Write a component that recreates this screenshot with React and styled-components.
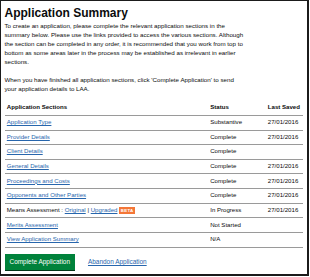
import React from "react";
import styled, { createGlobalStyle } from "styled-components";

const Global = createGlobalStyle`
  html, body { margin: 0; padding: 0; background: #fff; }
  body { font-family: "Liberation Sans", Arial, sans-serif; color: #0b0c0c; }
`;

const Frame = styled.div`
  box-sizing: border-box;
  width: 309px;
  height: 276px;
  border: 2px solid #1b1b1b;
  border-left-width: 1.5px;
  border-top-width: 1.5px;
  padding: 3.5px 4px 3.6px 3.5px;
  background: #fff;
  overflow: hidden;
`;

const Title = styled.h1`
  margin: 0;
  font-size: 12px;
  line-height: 16px;
  font-weight: 700;
  letter-spacing: 0;
`;

const Para = styled.p`
  margin: ${(p) => (p.$gap ? "9px" : "0")} 0 0;
  font-size: 6.2px;
  line-height: 9px;
  white-space: nowrap;
`;

const Sections = styled.div`
  margin-top: 8.7px;
  width: 298px;
  font-size: 6.1px;
  line-height: 9px;
`;

const Row = styled.div`
  box-sizing: border-box;
  display: grid;
  grid-template-columns: 203.4px 57.6px 1fr;
  height: 14.67px;
  padding-top: 1.3px;
  border-bottom: 1px solid #9a9a9a;
  font-weight: ${(p) => (p.$head ? 700 : 400)};
`;

const Cell = styled.div`
  padding-left: 2.3px;
  white-space: nowrap;
`;

const Link = styled.a`
  color: #2766ad;
  text-decoration: underline;
  text-underline-offset: 1px;
  text-decoration-thickness: 0.5px;
  cursor: pointer;
`;

const Tag = styled.span`
  display: inline-block;
  margin-left: 1.7px;
  padding: 0 1.6px;
  background: #f47738;
  color: #fff;
  font-size: 4.4px;
  line-height: 7px;
  font-weight: 700;
  letter-spacing: 0.3px;
  vertical-align: 0.5px;
`;

const Actions = styled.div`
  display: flex;
  align-items: center;
  gap: 13.3px;
  margin-top: 6px;
  font-size: 6.45px;
`;

const Button = styled.button`
  height: 16px;
  padding: 0 4.7px 0 5px;
  border: none;
  background: #00823b;
  box-shadow: 0 1px 0 #003618;
  color: #fff;
  font-family: "Liberation Sans", Arial, sans-serif;
  font-size: 6.45px;
  line-height: 16px;
  cursor: pointer;
`;

const rows = [
  { name: "Application Type", status: "Substantive", saved: "27/01/2016" },
  { name: "Provider Details", status: "Complete", saved: "27/01/2016" },
  { name: "Client Details", status: "Complete", saved: "" },
  { name: "General Details", status: "Complete", saved: "27/01/2016" },
  { name: "Proceedings and Costs", status: "Complete", saved: "27/01/2016" },
  { name: "Opponents and Other Parties", status: "Complete", saved: "27/01/2016" },
  { means: true, status: "In Progress", saved: "27/01/2016" },
  { name: "Merits Assessment", status: "Not Started", saved: "" },
  { name: "View Application Summary", status: "N/A", saved: "" },
];

export default function App() {
  return (
    <>
      <Global />
      <Frame>
        <Title>Application Summary</Title>
        <Para>
          To create an application, please complete the relevant application sections in the
          <br />
          summary below. Please use the links provided to access the various sections. Although
          <br />
          the section can be completed in any order, it is recommended that you work from top to
          <br />
          bottom as some areas later in the process may be established as irrelevant in earlier
          <br />
          sections.
        </Para>
        <Para $gap>
          When you have finished all application sections, click 'Complete Application' to send
          <br />
          your application details to LAA.
        </Para>
        <Sections>
          <Row $head>
            <Cell>Application Sections</Cell>
            <Cell>Status</Cell>
            <Cell>Last Saved</Cell>
          </Row>
          {rows.map((r, i) => (
            <Row key={i}>
              <Cell>
                {r.means ? (
                  <>
                    Means Assessment : <Link>Original</Link> | <Link>Upgraded</Link>
                    <Tag>BETA</Tag>
                  </>
                ) : (
                  <Link>{r.name}</Link>
                )}
              </Cell>
              <Cell>{r.status}</Cell>
              <Cell>{r.saved}</Cell>
            </Row>
          ))}
        </Sections>
        <Actions>
          <Button>Complete Application</Button>
          <Link>Abandon Application</Link>
        </Actions>
      </Frame>
    </>
  );
}
